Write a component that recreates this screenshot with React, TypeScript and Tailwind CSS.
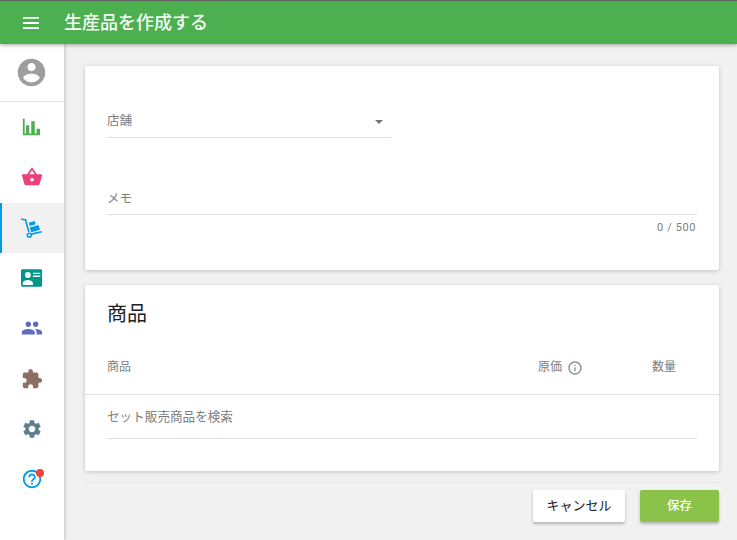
import { ReactNode } from "react";

const FONT = "font-['Roboto','Noto_Sans_CJK_JP',sans-serif]";

function Icon({ className, children }: { className: string; children: ReactNode }) {
  return (
    <svg viewBox="0 0 24 24" fill="currentColor" className={className}>
      {children}
    </svg>
  );
}

const NAV_ITEMS: { key: string; color: string; active?: boolean; badge?: boolean; icon: ReactNode }[] = [
  {
    key: "reports",
    color: "text-[#4caf50]",
    icon: (
      <path d="M2 3h2v16h1.500V10.200H9V19h2.200V5.800H15V19h2v-5.200h3.700V21H2z" />
    ),
  },
  {
    key: "sales",
    color: "text-[#ec407a]",
    icon: (
      <path d="M5.500 21c-.78 0-1.460-.45-1.790-1.100L1.100 10.440 1 10a1 1 0 0 1 1-1h4.580l4.600-6.570c.18-.26.48-.43.82-.43s.65.17.83.44L17.420 9H22a1 1 0 0 1 1 1l-.04.29-2.670 9.610c-.33.65-1.010 1.100-1.790 1.100H5.500M12 4.740 9 9h6l-3-4.260M12 13a2 2 0 0 0-2 2 2 2 0 0 0 2 2 2 2 0 0 0 2-2 2 2 0 0 0-2-2z" />
    ),
  },
  {
    key: "inventory",
    color: "text-[#039be5]",
    active: true,
    icon: (
      <>
        <path d="M0 1.500l5.600.6 3.800 14-1.700.5L4.200 3.700 0 3.400z" />
        <path d="M8.500 6.200l6.500-1.800 1 3.500-6.500 1.800zM9.500 11.500l9.500-2.700 1.800 5.200-9.700 2.700z" />
        <path d="M11 17.700l11.500-2.500.4 1.800-11.500 2.500z" />
        <path fillRule="evenodd" d="M9 16.800a3 3 0 1 1 0 6 3 3 0 0 1 0-6zm0 1.700a1.300 1.300 0 1 0 0 2.600 1.300 1.300 0 0 0 0-2.600z" />
      </>
    ),
  },
  {
    key: "customers",
    color: "text-[#009688]",
    icon: (
      <path
        fillRule="evenodd"
        d="M1.500 2.500h20a1.500 1.500 0 0 1 1.500 1.500v16a1.500 1.500 0 0 1-1.500 1.500h-20A1.500 1.500 0 0 1 0 20V4a1.500 1.500 0 0 1 1.500-1.500zm6 3a3.200 3.200 0 1 0 0 6.400 3.200 3.200 0 0 0 0-6.400zM1.900 17.500v2.100H13v-2.100c0-2-3.700-3.300-5.550-3.300S1.900 15.500 1.900 17.500zM13 6.200v1.500h8V6.200zm0 3.200V11h8V9.400z"
      />
    ),
  },
  {
    key: "staff",
    color: "text-[#5c6bc0]",
    icon: (
      <path d="M16 11c1.660 0 2.990-1.340 2.990-3S17.660 5 16 5c-1.660 0-3 1.340-3 3s1.340 3 3 3zm-8 0c1.660 0 2.990-1.340 2.990-3S9.660 5 8 5C6.340 5 5 6.340 5 8s1.340 3 3 3zm0 2c-2.330 0-7 1.170-7 3.500V19h14v-2.500c0-2.330-4.670-3.500-7-3.500zm8 0c-.29 0-.62.02-.97.05 1.160.84 1.970 1.970 1.970 3.450V19h6v-2.500c0-2.330-4.670-3.500-7-3.500z" />
    ),
  },
  {
    key: "addons",
    color: "text-[#8d6e63]",
    icon: (
      <path d="M20.500 11H19V7c0-1.100-.9-2-2-2h-4V3.500C13 2.120 11.880 1 10.500 1S8 2.120 8 3.500V5H4c-1.100 0-1.990.9-1.990 2v3.800H3.500c1.490 0 2.700 1.210 2.700 2.700s-1.210 2.700-2.700 2.700H2V20c0 1.100.9 2 2 2h3.800v-1.500c0-1.490 1.210-2.700 2.700-2.700 1.490 0 2.700 1.210 2.700 2.700V22H17c1.100 0 2-.9 2-2v-4h1.500c1.380 0 2.500-1.120 2.500-2.500S21.880 11 20.500 11z" />
    ),
  },
  {
    key: "settings",
    color: "text-[#607d8b]",
    icon: (
      <path d="M19.140 12.940c.04-.3.060-.61.060-.94 0-.32-.02-.64-.07-.94l2.030-1.580a.49.49 0 0 0 .12-.61l-1.920-3.320a.488.488 0 0 0-.59-.22l-2.390.96c-.5-.38-1.030-.7-1.620-.94l-.36-2.540a.484.484 0 0 0-.48-.41h-3.840c-.24 0-.43.17-.47.41l-.36 2.540c-.59.24-1.130.57-1.620.94l-2.390-.96c-.22-.08-.47 0-.59.22L2.740 8.870c-.12.21-.08.47.12.61l2.030 1.580c-.05.3-.09.63-.09.94s.02.64.07.94l-2.030 1.580a.49.49 0 0 0-.12.61l1.920 3.320c.12.22.37.29.59.22l2.390-.96c.5.38 1.030.7 1.620.94l.36 2.540c.05.24.24.41.48.41h3.840c.24 0 .44-.17.47-.41l.36-2.540c.59-.24 1.130-.56 1.620-.94l2.390.96c.22.08.47 0 .59-.22l1.920-3.320c.12-.22.07-.47-.12-.61l-2.010-1.580zM12 15.600c-1.980 0-3.600-1.620-3.600-3.600s1.620-3.600 3.600-3.600 3.600 1.620 3.600 3.600-1.620 3.600-3.600 3.600z" />
    ),
  },
  {
    key: "help",
    color: "text-[#039be5]",
    badge: true,
    icon: (
      <path d="M11 18h2v-2h-2v2zm1-16C6.480 2 2 6.480 2 12s4.480 10 10 10 10-4.480 10-10S17.520 2 12 2zm0 18c-4.410 0-8-3.590-8-8s3.590-8 8-8 8 3.590 8 8-3.590 8-8 8zm0-14c-2.210 0-4 1.790-4 4h2c0-1.100.9-2 2-2s2 .9 2 2c0 2-3 1.750-3 5h2c0-2.250 3-2.500 3-5 0-2.210-1.790-4-4-4z" />
    ),
  },
];

function Sidebar() {
  return (
    <aside className="z-10 flex w-[64px] shrink-0 flex-col bg-white shadow-[0_0_4px_rgba(0,0,0,0.3)]">
      <div className="flex h-[58px] items-center justify-center border-b border-[#e0e0e0]">
        <Icon className="mr-[1px] h-[33px] w-[33px] text-[#9e9e9e]">
          <path d="M12 2C6.480 2 2 6.480 2 12s4.480 10 10 10 10-4.480 10-10S17.520 2 12 2zm0 3c1.660 0 3 1.340 3 3s-1.340 3-3 3-3-1.340-3-3 1.340-3 3-3zm0 14.200c-2.500 0-4.710-1.280-6-3.220.03-1.990 4-3.080 6-3.080 1.990 0 5.970 1.090 6 3.080-1.290 1.940-3.500 3.220-6 3.220z" />
        </Icon>
      </div>
      <nav className="flex flex-col">
        {NAV_ITEMS.map((item) => (
          <div
            key={item.key}
            className={`flex h-[50.300px] items-center justify-center border-l-2 ${
              item.active ? "border-[#039be5] bg-[#f1f1f1]" : "border-transparent"
            }`}
          >
            <div className="relative mr-[2px]">
              <Icon className={`h-[22px] w-[22px] ${item.color}`}>{item.icon}</Icon>
              {item.badge && (
                <span className="absolute right-[-1px] top-[1px] h-[8px] w-[8px] rounded-full bg-[#f44336]" />
              )}
            </div>
          </div>
        ))}
      </nav>
    </aside>
  );
}

export default function App() {
  return (
    <div className={`flex h-[540px] w-[737px] flex-col overflow-hidden bg-[#f1f1f1] ${FONT}`}>
      <header className="z-20 flex h-[44px] shrink-0 items-center border-t border-[#616161] bg-[#4caf50] pl-[23px] shadow-[0_1px_4px_rgba(0,0,0,0.35)]">
        <svg viewBox="0 0 16 12" className="h-[12px] w-[16px]" fill="white">
          <path d="M0 0h16v1.800H0zM0 5.100h16v1.800H0zM0 10.200h16V12H0z" />
        </svg>
        <h1 className="ml-[25px] text-[18px] font-medium text-[#f4fbf4]">生産品を作成する</h1>
      </header>
      <div className="flex min-h-0 flex-1">
        <Sidebar />
        <main className="flex-1 px-[18px] pl-[21px] pt-[22px]">
          <section className="h-[204px] rounded-[2px] bg-white px-[22px] pt-[42px] shadow-[0_1px_4px_rgba(0,0,0,0.2)]">
            <div className="flex h-[30px] w-[284px] items-center justify-between border-b border-[#e0e0e0] pb-[3px] pr-[8px]">
              <span className="text-[12.500px] text-[#7d7d7d]">店舗</span>
              <span className="mt-[2px] h-0 w-0 border-x-[4px] border-t-[4px] border-x-transparent border-t-[#757575]" />
            </div>
            <div className="mt-[47px] flex h-[30px] items-center border-b border-[#e0e0e0] pb-[1px] text-[12.500px] text-[#7d7d7d]">
              メモ
            </div>
            <p className="mr-[1px] mt-[5px] text-right text-[11px] tracking-[0.6px] text-[#7d7d7d]">0 / 500</p>
          </section>
          <section className="mt-[15px] h-[186px] rounded-[2px] bg-white shadow-[0_1px_4px_rgba(0,0,0,0.2)]">
            <h2 className="px-[22px] pt-[15px] text-[20px] leading-[28px] text-[#212121]">商品</h2>
            <div className="mt-[12px] flex h-[55px] items-center border-b border-[#e0e0e0] pl-[22px] pr-[43px] text-[12px] text-[#7d7d7d]">
              <span className="flex-1">商品</span>
              <span className="flex w-[114px] items-center gap-[5px]">
                原価
                <svg viewBox="0 0 24 24" fill="currentColor" className="mt-[2px] h-[16px] w-[16px] text-[#8a8a8a]">
                  <path d="M11 7h2v2h-2zm0 4h2v6h-2zm1-9C6.480 2 2 6.480 2 12s4.480 10 10 10 10-4.480 10-10S17.520 2 12 2zm0 18c-4.410 0-8-3.590-8-8s3.590-8 8-8 8 3.590 8 8-3.590 8-8 8z" />
                </svg>
              </span>
              <span className="w-[24px]">数量</span>
            </div>
            <div className="mx-[22px] flex h-[44px] items-center border-b border-[#e0e0e0] pt-[1px] text-[12.600px] text-[#7d7d7d]">
              セット販売商品を検索
            </div>
          </section>
          <div className="mt-[11px] flex justify-end gap-[15px] border-t border-[#e6e6e6] pt-[7px]">
            <button className="h-[32px] w-[92px] rounded-[2px] bg-white text-[13px] text-[#212121] shadow-[0_2px_3px_rgba(0,0,0,0.25)]">
              キャンセル
            </button>
            <button className="h-[32px] w-[79px] rounded-[2px] bg-[#8bc34a] text-[12.500px] font-medium text-white shadow-[0_2px_3px_rgba(0,0,0,0.25)]">
              保存
            </button>
          </div>
        </main>
      </div>
    </div>
  );
}
